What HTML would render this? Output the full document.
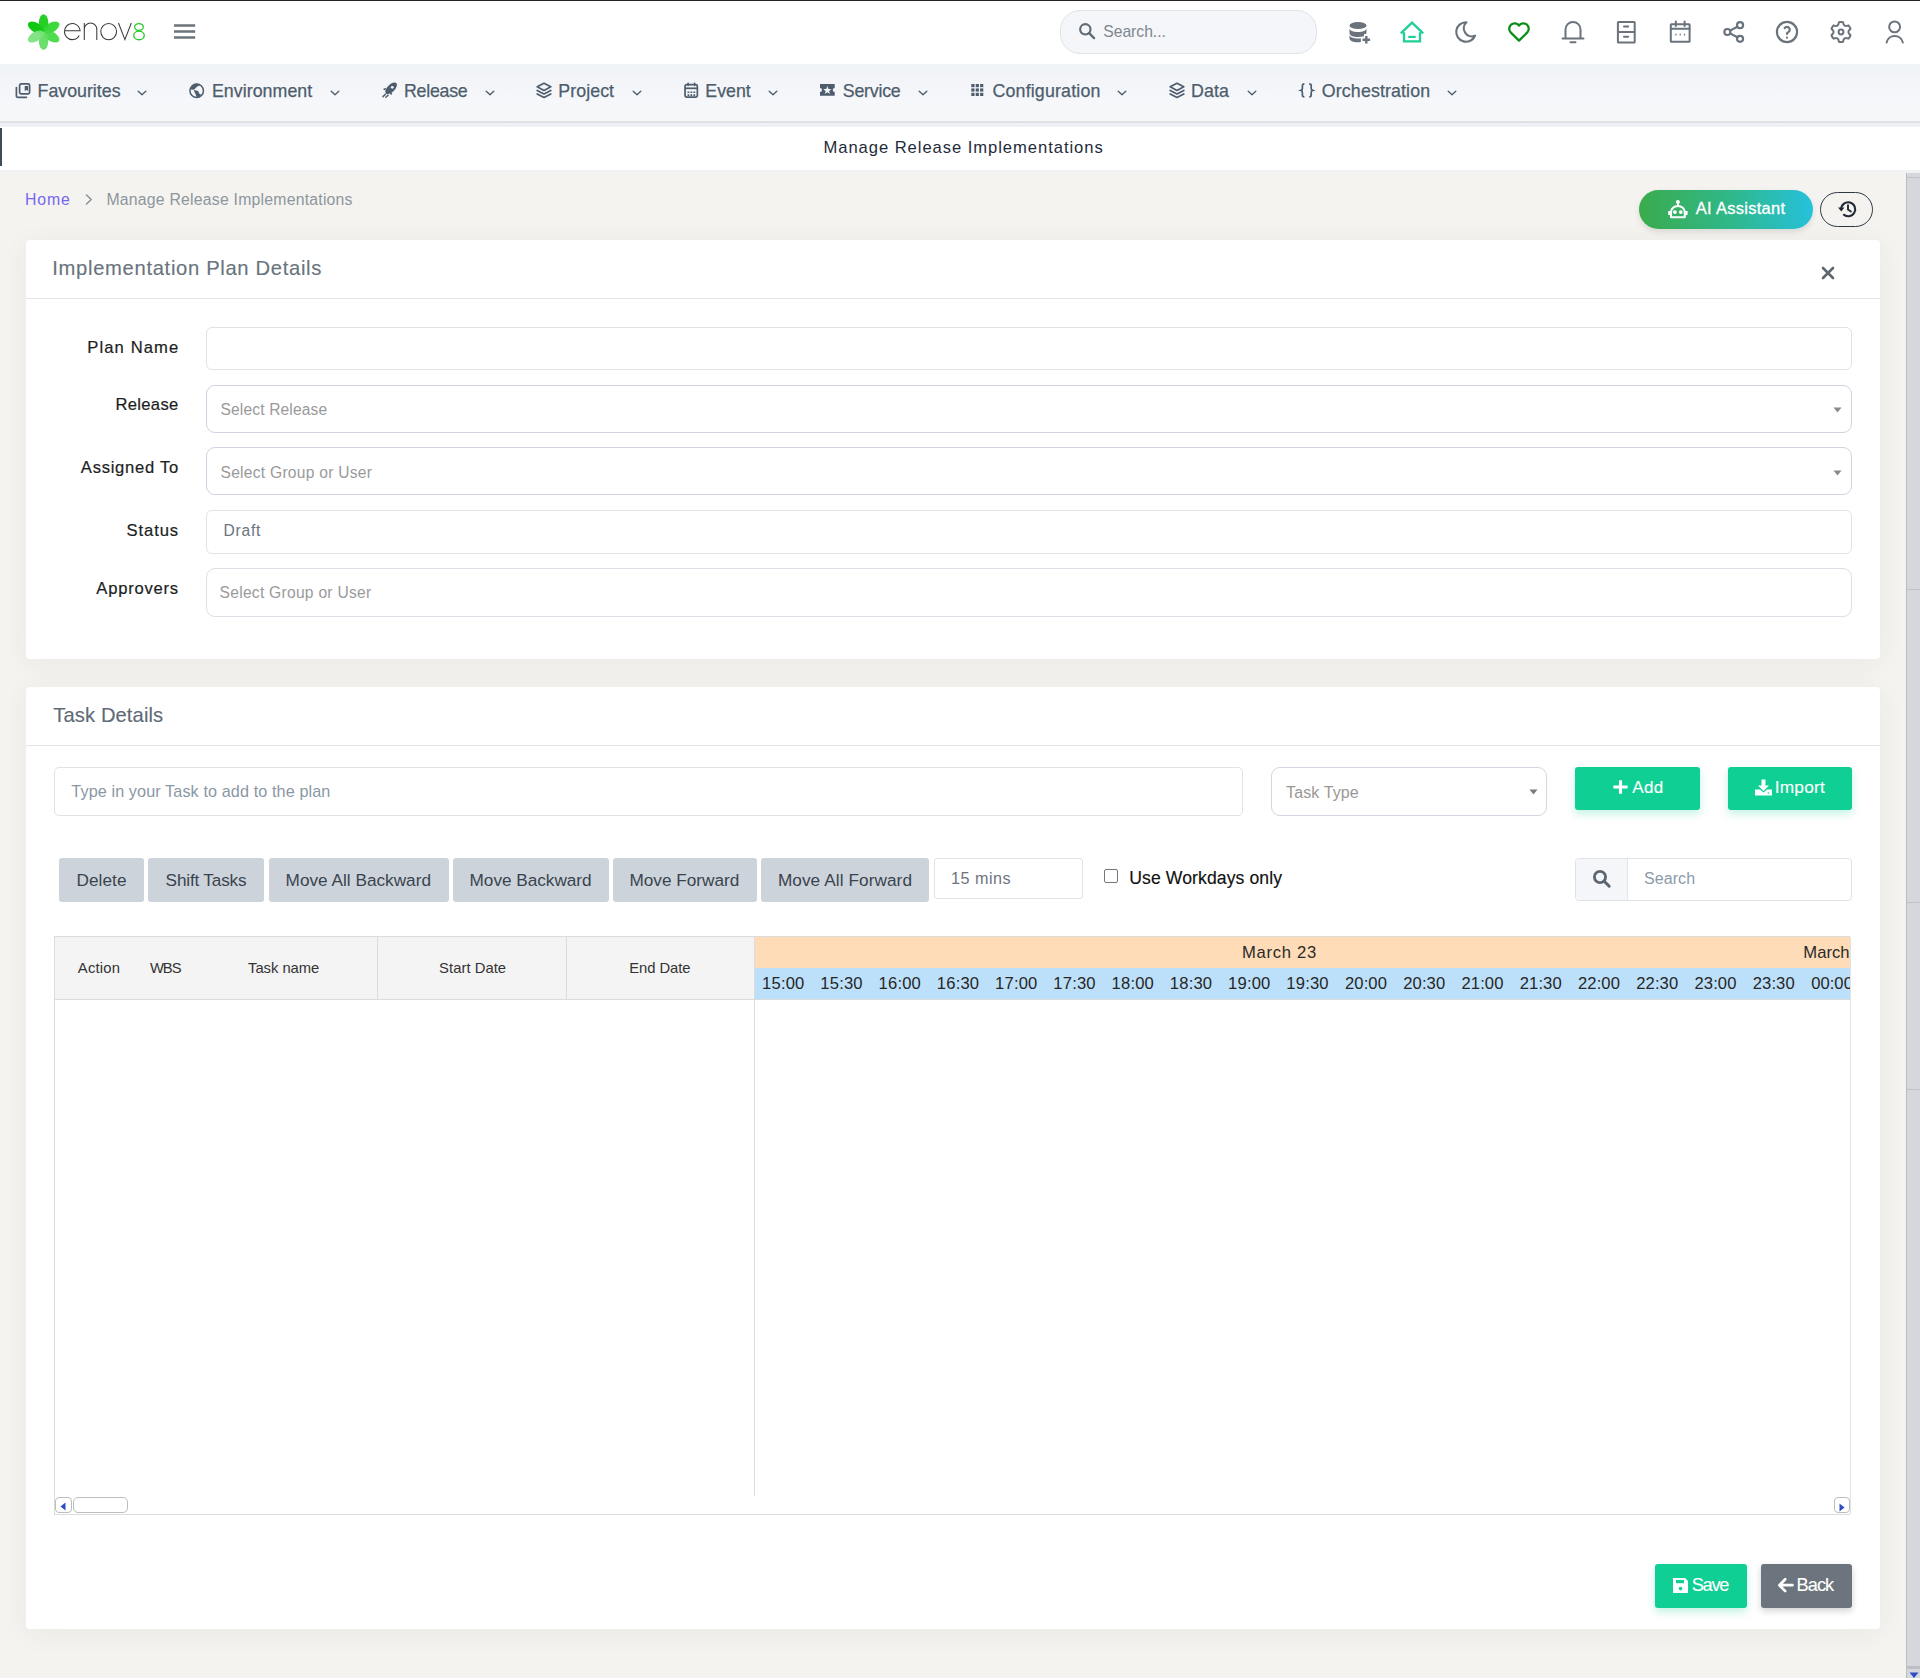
<!DOCTYPE html><html><head><meta charset="utf-8"><title>Manage Release Implementations</title><style>
html,body{margin:0;padding:0;}
body{width:1920px;height:1678px;overflow:hidden;position:relative;background:#f4f3f0;font-family:"Liberation Sans",sans-serif;}
.t{position:absolute;white-space:nowrap;line-height:1;}
.r{position:absolute;box-sizing:border-box;}
svg.i{position:absolute;overflow:visible;}
</style></head><body><div class="r" style="left:0px;top:0px;width:1920px;height:1px;background:#242424;"></div><div class="r" style="left:0px;top:1px;width:1920px;height:63px;background:#fff;"></div><svg class="i" style="left:0;top:0" width="160" height="64" viewBox="0 0 160 64"><ellipse cx="43.6" cy="23.1" rx="4.75" ry="8.9" fill="#05c405" transform="rotate(300 43.6 32)" opacity="0.95"/><ellipse cx="43.6" cy="23.1" rx="4.75" ry="8.9" fill="#1acb1a" transform="rotate(0 43.6 32)" opacity="0.95"/><ellipse cx="43.6" cy="23.1" rx="4.75" ry="8.9" fill="#30d730" transform="rotate(60 43.6 32)" opacity="0.95"/><ellipse cx="43.6" cy="23.1" rx="4.75" ry="8.9" fill="#46da46" transform="rotate(120 43.6 32)" opacity="0.95"/><ellipse cx="43.6" cy="23.1" rx="4.75" ry="8.9" fill="#62de62" transform="rotate(180 43.6 32)" opacity="0.95"/><ellipse cx="43.6" cy="23.1" rx="4.75" ry="8.9" fill="#7de27d" transform="rotate(240 43.6 32)" opacity="0.95"/><g fill="none" stroke="#3b3b3b" stroke-width="1.05"><path d="M64.5 30.8H80.1A7.8 8.05 0 1 0 79.2 35.4"/><path d="M84.3 40.1V23M84.3 29.3A6.25 6.3 0 0 1 96.8 29.3V40.1"/><ellipse cx="108.65" cy="31.55" rx="7.9" ry="8.1"/><path d="M118.5 23L124.9 39.6L131.3 23"/></g><g fill="none" stroke="#22c822" stroke-width="1.3"><ellipse cx="138.95" cy="27" rx="4.3" ry="3.4"/><ellipse cx="139" cy="35.45" rx="5.25" ry="4.3"/></g></svg><svg class="i" style="left:170px;top:20px;" width="30" height="24" viewBox="0 0 30 24"><path d="M4 5.55h21.2M4 11.45h21.2M4 17.45h21.2" stroke="#6b737b" stroke-width="2.5"/></svg><div class="r" style="left:1060px;top:10px;width:257px;height:44px;border:1px solid #dfe2e7;border-radius:20px;background:#f4f6f9;"></div><svg class="i" style="left:1077px;top:21px;" width="20" height="20" viewBox="0 0 24 24"><circle cx="10" cy="10" r="6.2" fill="none" stroke="#5f6a74" stroke-width="2.6"/><path d="M14.6 14.6L20.5 20.5" stroke="#5f6a74" stroke-width="2.8" stroke-linecap="round"/></svg><div class="t" style="left:1103.28px;top:24.00px;font-size:15.7px;color:#7d8790;letter-spacing:-0.023px;">Search...</div><svg class="i" style="left:1347px;top:20px;" width="26" height="26" viewBox="0 0 26 26"><ellipse cx="11" cy="5.5" rx="8.5" ry="3.6" fill="#6a737c"/><path d="M2.5 8.2c0 2.2 3.8 3.8 8.5 3.8s8.5-1.6 8.5-3.8v4.2c0 .6-.3 1.2-.8 1.7h-1.7v2.1c-1.6.5-3.6.8-6 .8-4.7 0-8.5-1.6-8.5-3.8z" fill="#6a737c"/><path d="M2.5 14.8c0 2.2 3.8 3.8 8.5 3.8 1 0 2-.1 2.9-.2v3.6c-.9.1-1.9.2-2.9.2-4.7 0-8.5-1.6-8.5-3.8z" fill="#6a737c"/><path d="M19.3 16v7.5M15.5 19.8h7.6" stroke="#6a737c" stroke-width="2.4"/></svg><svg class="i" style="left:1399px;top:21px;" width="26" height="24" viewBox="0 0 26 24"><path d="M5 11.2V20.4h16V11.2M1.8 12.3L13 1.7l11.2 10.6" fill="none" stroke="#20cf98" stroke-width="2.3" stroke-linejoin="miter"/><path d="M9.3 15.9h7.4" stroke="#20cf98" stroke-width="2.2"/></svg><svg class="i" style="left:1453px;top:19px;" width="26" height="26" viewBox="0 0 24 24"><path d="M12 3c.132 0 .263 0 .393 0a7.5 7.5 0 0 0 7.92 12.446a9 9 0 1 1 -8.313 -12.454z" fill="none" stroke="#6a737c" stroke-width="2" stroke-linecap="round" stroke-linejoin="round"/></svg><svg class="i" style="left:1506px;top:19px;" width="26" height="26" viewBox="0 0 24 24"><path d="M19.5 12.572l-7.5 7.428l-7.5 -7.428a5 5 0 1 1 7.5 -6.566a5 5 0 1 1 7.5 6.572" fill="none" stroke="#0a8f16" stroke-width="2.1" stroke-linecap="round" stroke-linejoin="round"/></svg><svg class="i" style="left:1560px;top:19px;" width="26" height="26" viewBox="0 0 26 26"><path d="M5.5 19.5V10.4a7.5 7.5 0 0 1 15 0v9.1M2.5 19.6h21M10.5 23.3h5" fill="none" stroke="#6a737c" stroke-width="2" stroke-linecap="round" stroke-linejoin="round" stroke-width="2.1"/></svg><svg class="i" style="left:1614px;top:19px;" width="24" height="26" viewBox="0 0 24 26"><rect x="3.9" y="3.1" width="16.8" height="20.4" rx="0.5" fill="none" stroke="#6a737c" stroke-width="2" stroke-linecap="round" stroke-linejoin="round" stroke-width="2.3"/><path d="M3.9 13.1h16.8M10 7.4h4.2M10 17.7h4.2" fill="none" stroke="#6a737c" stroke-width="2" stroke-linecap="round" stroke-linejoin="round" stroke-width="2.2"/></svg><svg class="i" style="left:1667px;top:19px;" width="26" height="26" viewBox="0 0 26 26"><rect x="3.8" y="5.2" width="18.8" height="17.5" rx="0.5" fill="none" stroke="#6a737c" stroke-width="2" stroke-linecap="round" stroke-linejoin="round" stroke-width="2.3"/><path d="M8.8 2.6v4.5M17.6 2.6v4.5M3.8 9.8h18.8" fill="none" stroke="#6a737c" stroke-width="2" stroke-linecap="round" stroke-linejoin="round" stroke-width="2.2"/><path d="M8.3 15.6h1.2M12.6 15.6h1.2M16.9 15.6h1.2" stroke="#6a737c" stroke-width="1.9"/></svg><svg class="i" style="left:1721px;top:19px;" width="26" height="26" viewBox="0 0 24 24"><circle cx="5.9" cy="12" r="2.8" fill="none" stroke="#6a737c" stroke-width="2" stroke-linecap="round" stroke-linejoin="round" stroke-width="2.2"/><circle cx="17.6" cy="5.7" r="2.8" fill="none" stroke="#6a737c" stroke-width="2" stroke-linecap="round" stroke-linejoin="round" stroke-width="2.2"/><circle cx="17.6" cy="18.3" r="2.8" fill="none" stroke="#6a737c" stroke-width="2" stroke-linecap="round" stroke-linejoin="round" stroke-width="2.2"/><path d="M8.4 10.7l6.7-3.6M8.4 13.3l6.7 3.6" fill="none" stroke="#6a737c" stroke-width="2" stroke-linecap="round" stroke-linejoin="round" stroke-width="2.2"/></svg><svg class="i" style="left:1774px;top:19px;" width="26" height="26" viewBox="0 0 24 24"><circle cx="12" cy="12" r="9.3" fill="none" stroke="#6a737c" stroke-width="2" stroke-linecap="round" stroke-linejoin="round" stroke-width="2.2"/><path d="M12 17.2v.05M12 13.8a1.6 1.6 0 0 1 1.1 -1.6a2.6 2.6 0 1 0 -3.3 -3.8" fill="none" stroke="#6a737c" stroke-width="2" stroke-linecap="round" stroke-linejoin="round" stroke-width="2.4"/></svg><svg class="i" style="left:1829.3px;top:19.9px;" width="24" height="24" viewBox="0 0 24 24"><path d="M9.92 2.22A10.0 10.0 0 0 1 14.08 2.22Q14.60 7.50 19.43 5.31A10.0 10.0 0 0 1 21.51 8.91Q17.20 12.00 21.51 15.09A10.0 10.0 0 0 1 19.43 18.69Q14.60 16.50 14.08 21.78A10.0 10.0 0 0 1 9.92 21.78Q9.40 16.50 4.57 18.69A10.0 10.0 0 0 1 2.49 15.09Q6.80 12.00 2.49 8.91A10.0 10.0 0 0 1 4.57 5.31Q9.40 7.50 9.92 2.22z" fill="none" stroke="#6a737c" stroke-width="2" stroke-linecap="round" stroke-linejoin="round" stroke-width="2"/><circle cx="12" cy="12" r="2.4" fill="none" stroke="#6a737c" stroke-width="2" stroke-linecap="round" stroke-linejoin="round" stroke-width="2"/></svg><svg class="i" style="left:1882px;top:19px;" width="26" height="26" viewBox="0 0 26 26"><circle cx="12.6" cy="7.9" r="5.45" fill="none" stroke="#6a737c" stroke-width="2" stroke-linecap="round" stroke-linejoin="round" stroke-width="2.1"/><path d="M4.56 23.6A8.3 8.3 0 0 1 20.84 23.6" fill="none" stroke="#6a737c" stroke-width="2" stroke-linecap="round" stroke-linejoin="round" stroke-width="2.1" stroke-linecap="butt"/></svg><div class="r" style="left:0px;top:64px;width:1920px;height:57px;background:linear-gradient(#eff2f6,#f6f7fa 60%,#f7f8fa);"></div><div class="r" style="left:0px;top:121px;width:1920px;height:2px;background:#dde1e6;"></div><div class="r" style="left:0px;top:123px;width:1920px;height:4px;background:#edf0f4;"></div><div class="t" style="left:37.54px;top:83.00px;font-size:17.8px;color:#4d5d6d;-webkit-text-stroke:0.25px #4d5d6d;">Favourites</div><svg class="i" style="left:137.3px;top:88px;" width="10" height="10" viewBox="0 0 10 10"><path d="M1.2 3.2L5 6.8L8.8 3.2" fill="none" stroke="#4d5d6d" stroke-width="1.35" stroke-linecap="round" stroke-linejoin="round"/></svg><svg class="i" style="left:15px;top:82px;" width="16" height="17" viewBox="0 0 16 17"><rect x="4.6" y="1.9" width="10" height="10" rx="1.6" fill="none" stroke="#4d5d6d" stroke-width="1.7"/><path d="M1.4 5.5v8.4a1.4 1.4 0 0 0 1.4 1.4h8.6" fill="none" stroke="#4d5d6d" stroke-width="1.7" stroke-linecap="round"/><path d="M9.7 3.9h3.4v5.2l-1.7-1.2-1.7 1.2z" fill="#4d5d6d"/></svg><div class="t" style="left:211.94px;top:83.00px;font-size:17.8px;color:#4d5d6d;letter-spacing:0.045px;-webkit-text-stroke:0.25px #4d5d6d;">Environment</div><svg class="i" style="left:329.5px;top:88px;" width="10" height="10" viewBox="0 0 10 10"><path d="M1.2 3.2L5 6.8L8.8 3.2" fill="none" stroke="#4d5d6d" stroke-width="1.35" stroke-linecap="round" stroke-linejoin="round"/></svg><svg class="i" style="left:189.4px;top:82.5px;" width="16" height="16" viewBox="0 0 16 16"><circle cx="7.7" cy="7.8" r="6.75" fill="none" stroke="#4d5d6d" stroke-width="1.5"/><path d="M1.8 6L3.5 2.2L6.6 0.8L10.8 1L10.8 2.45L9.1 2.9L6.8 4.75L5.4 6.4L2.7 6.8z" fill="#4d5d6d"/><path d="M4.75 7L9.3 7.9L9.96 10.2L12 11.8L11.4 13.5L7.7 14.3L6.8 11.8L5.6 9.3z" fill="#4d5d6d"/></svg><div class="t" style="left:403.94px;top:83.00px;font-size:17.8px;color:#4d5d6d;letter-spacing:-0.244px;-webkit-text-stroke:0.25px #4d5d6d;">Release</div><svg class="i" style="left:484.5px;top:88px;" width="10" height="10" viewBox="0 0 10 10"><path d="M1.2 3.2L5 6.8L8.8 3.2" fill="none" stroke="#4d5d6d" stroke-width="1.35" stroke-linecap="round" stroke-linejoin="round"/></svg><svg class="i" style="left:380.6px;top:82px;" width="17" height="17" viewBox="0 0 17 17"><ellipse cx="10.1" cy="6.3" rx="7.4" ry="3.7" transform="rotate(-45 10.1 6.3)" fill="#4d5d6d"/><circle cx="11.3" cy="5.3" r="1.35" fill="#f4f6f9"/><path d="M5.2 5.8L1.8 7.1L4.2 8.6z" fill="#4d5d6d"/><path d="M8.8 10.6L10 13.6L11.3 10.9z" fill="#4d5d6d"/><path d="M2 14.6L4.3 12.3M4.9 15.3L7 13.2" stroke="#4d5d6d" stroke-width="1.5" stroke-linecap="round"/></svg><div class="t" style="left:558.24px;top:83.00px;font-size:17.8px;color:#4d5d6d;letter-spacing:0.079px;-webkit-text-stroke:0.25px #4d5d6d;">Project</div><svg class="i" style="left:631.5px;top:88px;" width="10" height="10" viewBox="0 0 10 10"><path d="M1.2 3.2L5 6.8L8.8 3.2" fill="none" stroke="#4d5d6d" stroke-width="1.35" stroke-linecap="round" stroke-linejoin="round"/></svg><svg class="i" style="left:536px;top:82px;" width="16" height="17" viewBox="0 0 16 17"><path d="M8 1.2L14.8 4.8L8 8.4L1.2 4.8z" fill="none" stroke="#4d5d6d" stroke-width="1.7" stroke-linejoin="round"/><path d="M1.2 8.4L8 12L14.8 8.4M1.2 11.9L8 15.5L14.8 11.9" fill="none" stroke="#4d5d6d" stroke-width="1.7" stroke-linejoin="round" stroke-linecap="round"/></svg><div class="t" style="left:705.34px;top:83.00px;font-size:17.8px;color:#4d5d6d;letter-spacing:-0.008px;-webkit-text-stroke:0.25px #4d5d6d;">Event</div><svg class="i" style="left:768.1px;top:88px;" width="10" height="10" viewBox="0 0 10 10"><path d="M1.2 3.2L5 6.8L8.8 3.2" fill="none" stroke="#4d5d6d" stroke-width="1.35" stroke-linecap="round" stroke-linejoin="round"/></svg><svg class="i" style="left:683.6px;top:82px;" width="15" height="17" viewBox="0 0 15 17"><rect x="1.05" y="2.6" width="12.3" height="12.5" rx="1.6" fill="none" stroke="#4d5d6d" stroke-width="1.7"/><path d="M1.05 6.3h12.3" stroke="#4d5d6d" stroke-width="1.7"/><path d="M4.1 1.2v2.2M10.6 1.2v2.2" stroke="#4d5d6d" stroke-width="1.6" stroke-linecap="round"/><path d="M3.5 9.4h1.8v1.6H3.5zM6.45 9.4h1.8v1.6H6.45zM9.4 9.4h1.8v1.6H9.4zM3.5 12.3h1.8v1.6H3.5zM6.45 12.3h1.8v1.6H6.45zM9.4 12.3h1.8v1.6H9.4z" fill="#4d5d6d"/></svg><div class="t" style="left:842.78px;top:83.00px;font-size:17.8px;color:#4d5d6d;letter-spacing:-0.224px;-webkit-text-stroke:0.25px #4d5d6d;">Service</div><svg class="i" style="left:917.9px;top:88px;" width="10" height="10" viewBox="0 0 10 10"><path d="M1.2 3.2L5 6.8L8.8 3.2" fill="none" stroke="#4d5d6d" stroke-width="1.35" stroke-linecap="round" stroke-linejoin="round"/></svg><svg class="i" style="left:820.0px;top:84px;" width="15" height="12" viewBox="0 0 15 12"><path d="M0 0h14.7v3.9a2 2 0 0 0 0 4v3.8H0V7.9a2 2 0 0 0 0-4z" fill="#4d5d6d"/><path d="M7.35 2.10L8.44 4.90L11.44 5.07L9.11 6.97L9.88 9.88L7.35 8.25L4.82 9.88L5.59 6.97L3.26 5.07L6.26 4.90z" fill="#f4f6f9"/></svg><div class="t" style="left:992.49px;top:83.00px;font-size:17.8px;color:#4d5d6d;letter-spacing:0.174px;-webkit-text-stroke:0.25px #4d5d6d;">Configuration</div><svg class="i" style="left:1116.5px;top:88px;" width="10" height="10" viewBox="0 0 10 10"><path d="M1.2 3.2L5 6.8L8.8 3.2" fill="none" stroke="#4d5d6d" stroke-width="1.35" stroke-linecap="round" stroke-linejoin="round"/></svg><svg class="i" style="left:971px;top:83px;" width="13" height="14" viewBox="0 0 13 14"><rect x="0.3" y="1.0" width="3.2" height="3.2" fill="#4d5d6d"/><rect x="0.3" y="5.4" width="3.2" height="3.2" fill="#4d5d6d"/><rect x="0.3" y="9.8" width="3.2" height="3.2" fill="#4d5d6d"/><rect x="4.7" y="1.0" width="3.2" height="3.2" fill="#4d5d6d"/><rect x="4.7" y="5.4" width="3.2" height="3.2" fill="#4d5d6d"/><rect x="4.7" y="9.8" width="3.2" height="3.2" fill="#4d5d6d"/><rect x="9.100000000000001" y="1.0" width="3.2" height="3.2" fill="#4d5d6d"/><rect x="9.100000000000001" y="5.4" width="3.2" height="3.2" fill="#4d5d6d"/><rect x="9.100000000000001" y="9.8" width="3.2" height="3.2" fill="#4d5d6d"/></svg><div class="t" style="left:1191.04px;top:83.00px;font-size:17.8px;color:#4d5d6d;letter-spacing:0.122px;-webkit-text-stroke:0.25px #4d5d6d;">Data</div><svg class="i" style="left:1247.2px;top:88px;" width="10" height="10" viewBox="0 0 10 10"><path d="M1.2 3.2L5 6.8L8.8 3.2" fill="none" stroke="#4d5d6d" stroke-width="1.35" stroke-linecap="round" stroke-linejoin="round"/></svg><svg class="i" style="left:1169px;top:82px;" width="16" height="17" viewBox="0 0 16 17"><path d="M8 1.2L14.8 4.8L8 8.4L1.2 4.8z" fill="none" stroke="#4d5d6d" stroke-width="1.7" stroke-linejoin="round"/><path d="M1.2 8.4L8 12L14.8 8.4M1.2 11.9L8 15.5L14.8 11.9" fill="none" stroke="#4d5d6d" stroke-width="1.7" stroke-linejoin="round" stroke-linecap="round"/></svg><div class="t" style="left:1321.86px;top:83.00px;font-size:17.8px;color:#4d5d6d;letter-spacing:0.121px;-webkit-text-stroke:0.25px #4d5d6d;">Orchestration</div><svg class="i" style="left:1446.5px;top:88px;" width="10" height="10" viewBox="0 0 10 10"><path d="M1.2 3.2L5 6.8L8.8 3.2" fill="none" stroke="#4d5d6d" stroke-width="1.35" stroke-linecap="round" stroke-linejoin="round"/></svg><svg class="i" style="left:1299.8px;top:82px;" width="14" height="17" viewBox="0 0 14 17"><path d="M4.4 1.8c-1.4 0-2 .6-2 1.9v2.6c0 1.1-.4 1.8-1.4 2.1 1 .3 1.4 1 1.4 2.1v2.6c0 1.3.6 1.9 2 1.9M9.2 1.8c1.4 0 2 .6 2 1.9v2.6c0 1.1.4 1.8 1.4 2.1-1 .3-1.4 1-1.4 2.1v2.6c0 1.3-.6 1.9-2 1.9" fill="none" stroke="#4d5d6d" stroke-width="1.7"/></svg><div class="r" style="left:0px;top:127px;width:1920px;height:43px;background:#fff;"></div><div class="r" style="left:0px;top:128px;width:2px;height:38px;background:#3f4b55;"></div><div class="t" style="left:823.44px;top:140.00px;font-size:16.6px;color:#1f2b3a;letter-spacing:0.947px;">Manage Release Implementations</div><div class="r" style="left:0px;top:170px;width:1920px;height:3px;background:linear-gradient(#eef1f4,#f1f2f2);"></div><div class="t" style="left:24.90px;top:192.00px;font-size:15.8px;color:#7467ef;letter-spacing:0.951px;">Home</div><svg class="i" style="left:84px;top:193px;" width="10" height="13" viewBox="0 0 10 13"><path d="M2.5 2L7.2 6.5L2.5 11" fill="none" stroke="#8c959c" stroke-width="1.6" stroke-linecap="round" stroke-linejoin="round"/></svg><div class="t" style="left:106.40px;top:192.00px;font-size:15.8px;color:#8d969d;letter-spacing:0.221px;">Manage Release Implementations</div><div class="r" style="left:1639px;top:190px;width:174px;height:39px;border-radius:20px;background:linear-gradient(90deg,#3aab4c,#2fb98e 55%,#26c1dc);box-shadow:0 3px 6px rgba(0,0,0,0.10);"></div><svg class="i" style="left:1667px;top:199px;" width="22" height="21" viewBox="0 0 22 21"><circle cx="10.9" cy="3" r="2" fill="#fff"/><path d="M10.9 4v3.2" stroke="#fff" stroke-width="1.8"/><path d="M4 18.2V13.2A6.9 6.2 0 0 1 17.8 13.2V18.2Z" fill="none" stroke="#fff" stroke-width="2.1" stroke-linejoin="round"/><circle cx="7.9" cy="13.1" r="1.9" fill="#fff"/><circle cx="13.8" cy="13.1" r="1.9" fill="#fff"/><path d="M1.2 12.1h2.2v3.8H1.2zM18.4 12.1h2.2v3.8h-2.2z" fill="#fff"/></svg><div class="t" style="left:1695.77px;top:200.00px;font-size:16.5px;color:#ffffff;letter-spacing:0.285px;-webkit-text-stroke:0.3px #fff;">AI Assistant</div><div class="r" style="left:1820px;top:192px;width:53px;height:35px;border:1.3px solid #2f3944;border-radius:18px;"></div><svg class="i" style="left:1836.5px;top:200px;" width="20" height="18" viewBox="0 0 20 18"><path d="M4.2 9.2A7 7 0 1 1 6.3 14.3" fill="none" stroke="#1f2933" stroke-width="2.1"/><path d="M1 7.6L4.3 11.6L7.4 7.6z" fill="#1f2933"/><path d="M11 5.2v4.4l2.9 1.9" fill="none" stroke="#1f2933" stroke-width="1.9" stroke-linecap="round"/></svg><div class="r" style="left:26px;top:240px;width:1854px;height:419px;background:#fff;border-radius:4px;box-shadow:0 4px 28px rgba(60,50,30,0.055);"></div><div class="t" style="left:52.34px;top:258.00px;font-size:20.2px;color:#6a747d;letter-spacing:0.680px;-webkit-text-stroke:0.15px #6a747d;">Implementation Plan Details</div><div class="r" style="left:26px;top:298px;width:1854px;height:1px;background:#e3e5e8;"></div><svg class="i" style="left:1821px;top:266px;" width="14" height="14" viewBox="0 0 14 14"><path d="M2 2L12 12M12 2L2 12" stroke="#5e666e" stroke-width="2.6" stroke-linecap="round"/></svg><div class="t" style="left:87.34px;top:340.00px;font-size:16.6px;color:#1b1e22;letter-spacing:1.096px;-webkit-text-stroke:0.2px #1b1e22;">Plan Name</div><div class="r" style="left:206px;top:327px;width:1645.5px;height:42.5px;border:1px solid #dfe2e7;border-radius:6px;background:#fff;"></div><div class="t" style="left:115.54px;top:397.00px;font-size:16.6px;color:#1b1e22;letter-spacing:0.298px;-webkit-text-stroke:0.2px #1b1e22;">Release</div><div class="r" style="left:206px;top:384.5px;width:1645.5px;height:48.0px;border:1px solid #cfd3df;border-radius:9px;background:#fff;"></div><div class="t" style="left:220.48px;top:402.00px;font-size:15.6px;color:#9a9a9a;letter-spacing:0.144px;">Select Release</div><div class="t" style="left:80.87px;top:460.00px;font-size:16.6px;color:#1b1e22;letter-spacing:0.719px;-webkit-text-stroke:0.2px #1b1e22;">Assigned To</div><div class="r" style="left:206px;top:447.2px;width:1645.5px;height:48.3px;border:1px solid #cfd3df;border-radius:9px;background:#fff;"></div><div class="t" style="left:220.48px;top:465.00px;font-size:15.6px;color:#9a9a9a;letter-spacing:0.266px;">Select Group or User</div><div class="t" style="left:126.54px;top:523.00px;font-size:16.6px;color:#1b1e22;letter-spacing:0.900px;-webkit-text-stroke:0.2px #1b1e22;">Status</div><div class="r" style="left:206px;top:510.4px;width:1645.5px;height:43.2px;border:1px solid #dfe2e7;border-radius:6px;background:#fff;"></div><div class="t" style="left:223.42px;top:523.00px;font-size:15.6px;color:#6b7480;letter-spacing:0.796px;">Draft</div><div class="t" style="left:96.37px;top:581.00px;font-size:16.6px;color:#1b1e22;letter-spacing:0.758px;-webkit-text-stroke:0.2px #1b1e22;">Approvers</div><div class="r" style="left:206px;top:568.4px;width:1645.5px;height:48.2px;border:1px solid #dcdfe6;border-radius:9px;background:#fff;"></div><div class="t" style="left:219.58px;top:585.00px;font-size:15.6px;color:#9a9a9a;letter-spacing:0.266px;">Select Group or User</div><svg class="i" style="left:1833px;top:406.5px;" width="9" height="6" viewBox="0 0 9 6"><path d="M0.5 0.5h8L4.5 5.5z" fill="#8a8a8a"/></svg><svg class="i" style="left:1833px;top:469.5px;" width="9" height="6" viewBox="0 0 9 6"><path d="M0.5 0.5h8L4.5 5.5z" fill="#8a8a8a"/></svg><div class="r" style="left:26px;top:687px;width:1854px;height:942px;background:#fff;border-radius:4px;box-shadow:0 4px 28px rgba(60,50,30,0.055);"></div><div class="t" style="left:53.31px;top:705.00px;font-size:20.2px;color:#5f6b77;letter-spacing:0.093px;-webkit-text-stroke:0.15px #5f6b77;">Task Details</div><div class="r" style="left:26px;top:745px;width:1854px;height:1px;background:#e3e5e8;"></div><div class="r" style="left:54px;top:767px;width:1189px;height:48.5px;border:1px solid #dfe2e7;border-radius:5px;"></div><div class="t" style="left:71.34px;top:783.00px;font-size:16.2px;color:#8a97a4;letter-spacing:0.107px;">Type in your Task to add to the plan</div><div class="r" style="left:1271px;top:767px;width:276px;height:48.5px;border:1px solid #d3d6de;border-radius:9px;"></div><div class="t" style="left:1286.05px;top:785.00px;font-size:16px;color:#9b9894;letter-spacing:0.114px;">Task Type</div><svg class="i" style="left:1529px;top:789px;" width="9" height="6" viewBox="0 0 9 6"><path d="M0.5 0.5h8L4.5 5.5z" fill="#7a7a7a"/></svg><div class="r" style="left:1575px;top:767px;width:125px;height:43px;background:#0fcf94;border-radius:3px;box-shadow:0 4px 8px rgba(15,207,148,0.25);"></div><svg class="i" style="left:1612px;top:779px;" width="16" height="16" viewBox="0 0 16 16"><path d="M8.5 1.2v13.6M1.4 8h14.2" stroke="#fff" stroke-width="3.1"/></svg><div class="t" style="left:1632.27px;top:779.00px;font-size:17px;color:#fff;letter-spacing:0.289px;-webkit-text-stroke:0.12px #fff;">Add</div><div class="r" style="left:1728px;top:767px;width:124px;height:43px;background:#0fcf94;border-radius:3px;box-shadow:0 4px 8px rgba(15,207,148,0.25);"></div><svg class="i" style="left:1754px;top:779px;" width="19" height="17" viewBox="0 0 19 17"><path d="M7.5 0.5h4v6h3.5l-5.5 5.5-5.5-5.5h3.5z" fill="#fff"/><path d="M1 10.5h5l3.5 3 3.5-3h5v6h-17z" fill="#fff"/><rect x="13.6" y="13.4" width="1.6" height="1.2" fill="#0fcf94"/></svg><div class="t" style="left:1774.71px;top:779.00px;font-size:17.3px;color:#fff;letter-spacing:0.237px;-webkit-text-stroke:0.12px #fff;">Import</div><div class="r" style="left:59px;top:858px;width:85px;height:44px;background:#cdd3da;border-radius:3px;"></div><div class="t" style="left:76.39px;top:872.00px;font-size:17.2px;color:#39434e;letter-spacing:0.092px;">Delete</div><div class="r" style="left:148px;top:858px;width:116px;height:44px;background:#cdd3da;border-radius:3px;"></div><div class="t" style="left:165.61px;top:872.00px;font-size:17.2px;color:#39434e;letter-spacing:-0.184px;">Shift Tasks</div><div class="r" style="left:269px;top:858px;width:180px;height:44px;background:#cdd3da;border-radius:3px;"></div><div class="t" style="left:285.59px;top:872.00px;font-size:17.2px;color:#39434e;letter-spacing:0.013px;">Move All Backward</div><div class="r" style="left:453px;top:858px;width:156px;height:44px;background:#cdd3da;border-radius:3px;"></div><div class="t" style="left:469.59px;top:872.00px;font-size:17.2px;color:#39434e;letter-spacing:-0.021px;">Move Backward</div><div class="r" style="left:613px;top:858px;width:144px;height:44px;background:#cdd3da;border-radius:3px;"></div><div class="t" style="left:629.39px;top:872.00px;font-size:17.2px;color:#39434e;letter-spacing:0.017px;">Move Forward</div><div class="r" style="left:761px;top:858px;width:168px;height:44px;background:#cdd3da;border-radius:3px;"></div><div class="t" style="left:777.89px;top:872.00px;font-size:17.2px;color:#39434e;letter-spacing:0.089px;">Move All Forward</div><div class="r" style="left:934px;top:858px;width:149px;height:41px;border:1px solid #dfe2e7;border-radius:3px;"></div><div class="t" style="left:950.97px;top:870.00px;font-size:16.2px;color:#6d7580;letter-spacing:0.483px;">15 mins</div><div class="r" style="left:1104.2px;top:869.2px;width:13.6px;height:13.4px;border:1.3px solid #777;border-radius:2px;background:#fff;"></div><div class="t" style="left:1129.34px;top:870.00px;font-size:17.6px;color:#111;letter-spacing:0.088px;-webkit-text-stroke:0.15px #111;">Use Workdays only</div><div class="r" style="left:1575px;top:858px;width:276.5px;height:43px;border:1px solid #dfe2e7;border-radius:4px;background:#fff;"></div><div class="r" style="left:1576px;top:859px;width:51.5px;height:41px;background:#f4f6fa;border-right:1px solid #e1e4e8;border-radius:3px 0 0 3px;"></div><svg class="i" style="left:1592px;top:869px;" width="20" height="20" viewBox="0 0 20 20"><circle cx="8" cy="8" r="5.6" fill="none" stroke="#5d6670" stroke-width="2.8"/><path d="M12.2 12.2L17.2 17.2" stroke="#5d6670" stroke-width="3" stroke-linecap="round"/></svg><div class="t" style="left:1644.06px;top:871.00px;font-size:16px;color:#8b9aaa;letter-spacing:0.058px;">Search</div><div class="r" style="left:54px;top:936px;width:1796px;height:579px;border:1px solid #dcdcdc;border-right:none;background:#fff;"></div><div class="r" style="left:55px;top:937px;width:699px;height:62px;background:#f4f4f4;"></div><div class="r" style="left:55px;top:999px;width:1795px;height:1px;background:#dcdcdc;"></div><div class="r" style="left:377px;top:937px;width:1px;height:62px;background:#dcdcdc;"></div><div class="r" style="left:566px;top:937px;width:1px;height:62px;background:#dcdcdc;"></div><div class="r" style="left:754px;top:937px;width:1px;height:559px;background:#dcdcdc;"></div><div class="r" style="left:1850px;top:937px;width:1px;height:577px;background:#e2e2e2;"></div><div class="t" style="left:77.87px;top:961.00px;font-size:14.8px;color:#333;letter-spacing:0.192px;">Action</div><div class="t" style="left:149.93px;top:961.00px;font-size:14.8px;color:#333;letter-spacing:-1.030px;">WBS</div><div class="t" style="left:248.07px;top:961.00px;font-size:14.8px;color:#333;letter-spacing:-0.035px;">Task name</div><div class="t" style="left:439.12px;top:961.00px;font-size:14.8px;color:#333;letter-spacing:0.034px;">Start Date</div><div class="t" style="left:629.19px;top:961.00px;font-size:14.8px;color:#333;letter-spacing:-0.062px;">End Date</div><div class="r" style="left:755px;top:937px;width:1095px;height:31px;background:#fddcb7;"></div><div class="r" style="left:755px;top:968px;width:1095px;height:31px;background:#bde0fa;"></div><div class="t" style="left:1241.94px;top:945.00px;font-size:16.6px;color:#2a2a2a;letter-spacing:0.715px;">March 23</div><div style="position:absolute;left:755px;top:937px;width:1095px;height:62px;overflow:hidden;"><div class="t" style="left:1048.34px;top:8.00px;font-size:16.6px;color:#2a2a2a;">March</div><div class="t" style="left:7.06px;top:39.00px;font-size:16.6px;color:#262626;letter-spacing:0.194px;">15:00</div><div class="t" style="left:65.31px;top:39.00px;font-size:16.6px;color:#262626;letter-spacing:0.194px;">15:30</div><div class="t" style="left:123.56px;top:39.00px;font-size:16.6px;color:#262626;letter-spacing:0.194px;">16:00</div><div class="t" style="left:181.81px;top:39.00px;font-size:16.6px;color:#262626;letter-spacing:0.194px;">16:30</div><div class="t" style="left:240.06px;top:39.00px;font-size:16.6px;color:#262626;letter-spacing:0.194px;">17:00</div><div class="t" style="left:298.31px;top:39.00px;font-size:16.6px;color:#262626;letter-spacing:0.194px;">17:30</div><div class="t" style="left:356.56px;top:39.00px;font-size:16.6px;color:#262626;letter-spacing:0.194px;">18:00</div><div class="t" style="left:414.81px;top:39.00px;font-size:16.6px;color:#262626;letter-spacing:0.194px;">18:30</div><div class="t" style="left:473.06px;top:39.00px;font-size:16.6px;color:#262626;letter-spacing:0.194px;">19:00</div><div class="t" style="left:531.31px;top:39.00px;font-size:16.6px;color:#262626;letter-spacing:0.194px;">19:30</div><div class="t" style="left:590.00px;top:39.00px;font-size:16.6px;color:#262626;letter-spacing:0.086px;">20:00</div><div class="t" style="left:648.25px;top:39.00px;font-size:16.6px;color:#262626;letter-spacing:0.086px;">20:30</div><div class="t" style="left:706.50px;top:39.00px;font-size:16.6px;color:#262626;letter-spacing:0.086px;">21:00</div><div class="t" style="left:764.75px;top:39.00px;font-size:16.6px;color:#262626;letter-spacing:0.086px;">21:30</div><div class="t" style="left:823.00px;top:39.00px;font-size:16.6px;color:#262626;letter-spacing:0.086px;">22:00</div><div class="t" style="left:881.25px;top:39.00px;font-size:16.6px;color:#262626;letter-spacing:0.086px;">22:30</div><div class="t" style="left:939.50px;top:39.00px;font-size:16.6px;color:#262626;letter-spacing:0.086px;">23:00</div><div class="t" style="left:997.75px;top:39.00px;font-size:16.6px;color:#262626;letter-spacing:0.086px;">23:30</div><div class="t" style="left:1056.18px;top:39.00px;font-size:16.6px;color:#262626;letter-spacing:0.040px;">00:00</div></div><div class="r" style="left:55px;top:1497px;width:16.5px;height:16px;border:1px solid #bdbdbd;border-radius:4px;background:#fff;"></div><svg class="i" style="left:60.3px;top:1501.5px;" width="6" height="9" viewBox="0 0 6 9"><path d="M5.5 0.5v8L0.5 4.5z" fill="#2b4cc4"/></svg><div class="r" style="left:72.5px;top:1497.3px;width:55.5px;height:15.5px;border:1px solid #bdbdbd;border-radius:5px;background:#fff;"></div><div class="r" style="left:1833.5px;top:1497.3px;width:16px;height:15.5px;border:1px solid #bdbdbd;border-radius:4px;background:#fff;"></div><svg class="i" style="left:1839px;top:1502.5px;" width="6" height="9" viewBox="0 0 6 9"><path d="M0.5 0.5v8L5.5 4.5z" fill="#2b4cc4"/></svg><div class="r" style="left:1655px;top:1564px;width:92px;height:44px;background:#0fcf94;border-radius:3px;box-shadow:0 4px 8px rgba(15,207,148,0.25);"></div><svg class="i" style="left:1672px;top:1577px;" width="17" height="17" viewBox="0 0 17 17"><path d="M1 1h12l3 3v12H1z" fill="#fff"/><rect x="4" y="3" width="8" height="3.2" fill="#0fcf94"/><circle cx="8.5" cy="11.6" r="1.8" fill="#0fcf94"/></svg><div class="t" style="left:1691.66px;top:1576.00px;font-size:18.2px;color:#fff;letter-spacing:-1.213px;-webkit-text-stroke:0.12px #fff;">Save</div><div class="r" style="left:1761px;top:1564px;width:91px;height:44px;background:#6c757d;border-radius:3px;box-shadow:0 3px 7px rgba(0,0,0,0.18);"></div><svg class="i" style="left:1777px;top:1577px;" width="18" height="17" viewBox="0 0 18 17"><path d="M8.2 2.3L2.4 8.2l5.8 5.9M2.9 8.2h12.6" fill="none" stroke="#fff" stroke-width="2.7" stroke-linecap="round" stroke-linejoin="round"/></svg><div class="t" style="left:1796.51px;top:1576.00px;font-size:18.2px;color:#fff;letter-spacing:-0.928px;-webkit-text-stroke:0.12px #fff;">Back</div><div class="r" style="left:1906px;top:173px;width:14px;height:1505px;background:#d4d8dd;border-left:1px solid #b9bdc3;box-sizing:border-box;"></div><div class="r" style="left:1907px;top:177px;width:13px;height:1px;background:#bfc3c9;"></div><div class="r" style="left:1907px;top:589px;width:13px;height:1px;background:#bfc3c9;"></div><div class="r" style="left:1907px;top:902px;width:13px;height:1px;background:#bfc3c9;"></div><div class="r" style="left:1907px;top:1089px;width:13px;height:1px;background:#bfc3c9;"></div><div class="r" style="left:1906px;top:1666px;width:14px;height:3px;background:#bcc0c6;border-radius:0 0 0 4px;"></div><svg class="i" style="left:1909px;top:1672px;" width="10" height="6" viewBox="0 0 10 6"><path d="M0.5 0.5h9L5 6z" fill="#2a4bc4"/></svg></body></html>
